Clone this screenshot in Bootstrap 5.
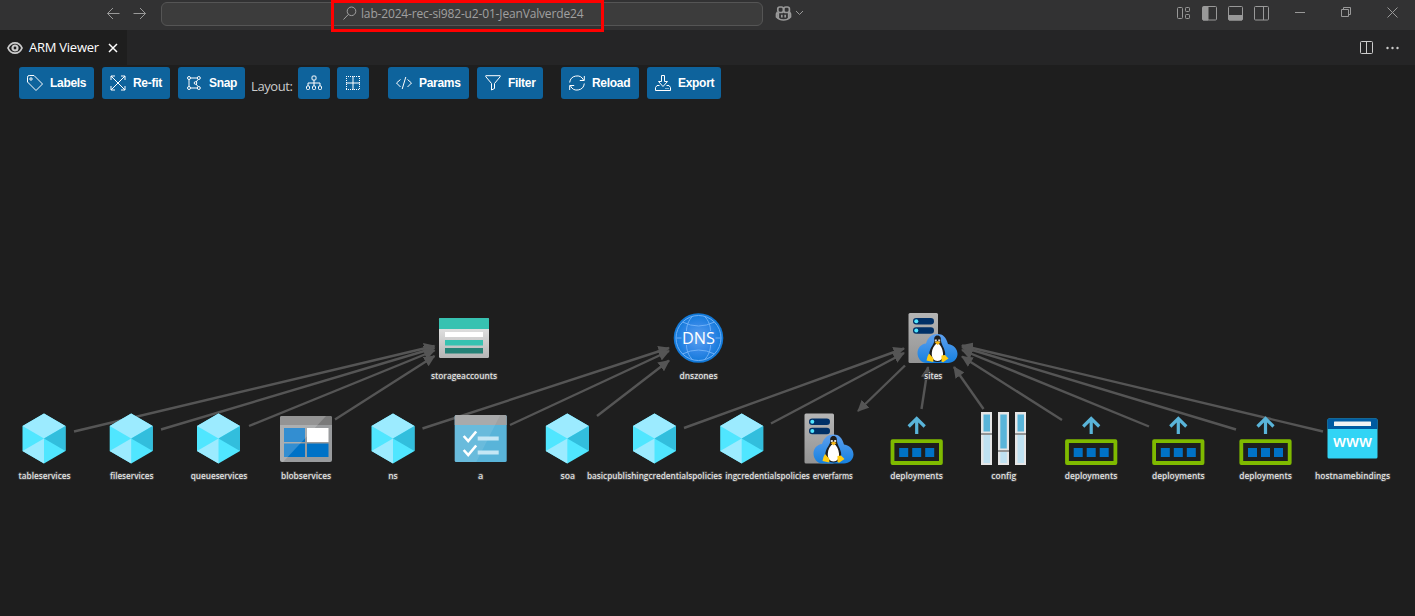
<!DOCTYPE html>
<html lang="en">
<head>
<meta charset="utf-8">
<meta name="viewport" content="width=device-width, initial-scale=1">
<title>ARM Viewer</title>
<link href="https://cdn.jsdelivr.net/npm/bootstrap@5.3.0/dist/css/bootstrap.min.css" rel="stylesheet">
<style>
body{background:#1e1e1e;color:#ccc;font-family:"Open Sans","Noto Sans",sans-serif;height:616px;overflow:hidden}
svg{display:block;flex:none}
.titlebar{height:30px;background:#323233;color:#999;padding:0 17px 4px 106px}
.ico{fill:none;stroke:currentColor;stroke-width:1}
.arrow-next{margin-left:13px}
.command{width:602px;height:24px;background:#3c3c3c;border:1px solid #555;border-radius:6px;margin:1px 0 0 14px;padding-left:181px;font-size:12px;letter-spacing:-.16px;color:#a0a0a0}
.callout{left:331px;top:0;width:273px;height:32px;border:3px solid #f00;z-index:2}
.tabstrip{height:35px;background:#252526}
.viewtab{width:127px;background:#1e1e1e;color:#fff;font-size:13px;padding-left:7px}
.toolbar{padding:2px 19px 0;height:34px}
.tool{height:32px;background:#0e639c;color:#fff;border-radius:3px;border:0;padding:0 8px;font:bold 12px "Liberation Sans",sans-serif;letter-spacing:-.3px;gap:7px;white-space:nowrap}
.tool.square{width:32px;padding:0 7px}
.layout-name{font-size:13px;width:53px;padding:10px 0 0 6px;letter-spacing:-.4px;white-space:nowrap}
.graph text{font-family:"Open Sans","Noto Sans",sans-serif}
.node-label{font-size:9px;font-weight:600;fill:#e2e2e2;text-anchor:middle;paint-order:stroke;stroke:#3a3a3a;stroke-width:2px}
</style>
</head>
<body class="d-flex flex-column">
<header class="titlebar d-flex align-items-center position-relative">
 <svg class="ico" width="14" height="14" viewBox="0 0 14 14"><path d="M13.500 7.500H1.500M7 2 1.500 7.500 7 13"/></svg>
 <svg class="ico arrow-next" width="14" height="14" viewBox="0 0 14 14"><path d="M.5 7.500h12M7 2 12.500 7.500 7 13"/></svg>
 <div class="command d-flex align-items-center">
  <svg class="ico" width="14" height="15" viewBox="0 0 14 15"><circle cx="8.500" cy="5.300" r="4.300"/><path d="M5.500 8.300.5 13.500"/></svg>
  <span style="margin-left:4px" id="repo">lab-2024-rec-si982-u2-01-JeanValverde24</span>
 </div>
 <svg style="margin-left:12px" width="17" height="15" viewBox="0 0 17 15" fill="none" stroke="#999" stroke-width="1.700"><rect x="2.800" y="1" width="5.600" height="5.500" rx="2"/><rect x="8.800" y="1" width="5.600" height="5.500" rx="2"/><path d="M2.500 6 1.500 8v3c2 2 4 3 7 3s5-1 7-3V8l-1-2M3.300 7v5M13.700 7v5M6.800 8.800v2.800M10.200 8.800v2.800"/></svg>
 <svg class="ico" style="margin-left:3px" width="9" height="6" viewBox="0 0 9 6"><path d="m1 1 3.500 3.500L8 1"/></svg>
 <div class="d-flex align-items-center ms-auto">
  <svg class="ico" width="15" height="14" viewBox="0 0 15 14"><rect x=".5" y="1.500" width="5" height="11" rx="1"/><rect x="8.500" y="1.500" width="4" height="4" rx=".8"/><rect x="8.500" y="8.500" width="4" height="4" rx=".8"/></svg>
  <svg class="ico" style="margin-left:10px" width="15" height="15" viewBox="0 0 15 15"><rect x=".5" y=".5" width="14" height="13.500" rx="1"/><path d="M1 1h5v13H1z" fill="currentColor"/></svg>
  <svg class="ico" style="margin-left:11px" width="15" height="15" viewBox="0 0 15 15"><rect x=".5" y=".5" width="14" height="13.500" rx="1"/><path d="M1 9.500h13V14H1z" fill="currentColor"/></svg>
  <svg class="ico" style="margin-left:11px" width="15" height="15" viewBox="0 0 15 15"><rect x=".5" y=".5" width="14" height="13.500" rx="1"/><path d="M9.500 1v13"/></svg>
  <svg class="ico" style="margin-left:26px" width="11" height="11" viewBox="0 0 11 11"><path d="M0 4.500h10"/></svg>
  <svg class="ico" style="margin-left:35px" width="11" height="12" viewBox="0 0 11 12"><path d="M.5 2.500h7v7h-7zM2.500 2V.5h7v7H8"/></svg>
  <svg class="ico" style="margin-left:35px" width="11" height="12" viewBox="0 0 11 12"><path d="m.5.500 10 10m0-10-10 10"/></svg>
 </div>
 <div class="callout position-absolute"></div>
</header>
<nav class="tabstrip d-flex">
 <div class="viewtab d-flex align-items-center">
  <svg width="16" height="14" viewBox="0 0 16 14" fill="none" stroke="#ccc"><path d="M1 7C2.500 3.500 5 1.800 8 1.800S13.500 3.500 15 7c-1.500 3.500-4 5.200-7 5.200S2.500 10.500 1 7Z" stroke-width="1.800"/><circle cx="8" cy="7" r="2.500" stroke-width="2.200"/></svg>
  <span id="tabname" style="margin-left:6px;letter-spacing:-.25px">ARM Viewer</span>
  <svg class="ico" style="margin-left:9px" width="10" height="10" viewBox="0 0 10 10"><path d="m1 1 8 8m0-8-8 8" stroke-width="1.500"/></svg>
 </div>
 <div class="d-flex align-items-center ms-auto" style="padding-right:15px">
  <svg class="ico" width="15" height="14" viewBox="0 0 15 14"><rect x=".5" y=".5" width="12" height="12" rx="1"/><path d="M6.500 1v12"/></svg>
  <svg style="margin-left:10px" width="15" height="4" viewBox="0 0 15 4" fill="#ccc"><circle cx="2.500" cy="2" r="1.200"/><circle cx="7.500" cy="2" r="1.200"/><circle cx="12.500" cy="2" r="1.200"/></svg>
 </div>
</nav>
<div class="toolbar d-flex">
 <button class="tool d-flex align-items-center" style="width:75px"><svg class="ico" width="16" height="16" viewBox="0 0 16 16"><path d="M.5 2.200V7L9 15.500 15.500 9 7 .5H2.200Q.5.500.5 2.200Z"/><circle cx="4" cy="4" r="1.200"/></svg>Labels</button>
 <button class="tool d-flex align-items-center ms-2" style="width:68px"><svg class="ico" width="16" height="16" viewBox="0 0 16 16"><path d="m1 1 14 14M15 1 1 15M1 5V1h4M11 1h4v4M15 11v4h-4M5 15H1v-4"/></svg>Re-fit</button>
 <button class="tool d-flex align-items-center ms-2" style="width:67px"><svg class="ico" width="16" height="16" viewBox="0 0 16 16"><circle cx="3" cy="3" r="1.500"/><circle cx="12.800" cy="3" r="1.500"/><circle cx="9.500" cy="8" r="1.300"/><circle cx="3" cy="13" r="1.500"/><circle cx="12.800" cy="13" r="1.500"/><path d="M4.500 3h6.800M3 4.500v7M4.500 13h6.800M12 4.500 10.200 7M10.200 9.100l1.800 2.500"/></svg>Snap</button>
 <span class="layout-name">Layout:</span>
 <button class="tool square" aria-label="Tree layout"><svg class="ico" width="18" height="18" viewBox="0 0 18 18"><rect x="7" y="2" width="4" height="4" rx="1"/><rect x="1.500" y="12" width="3" height="3.500" rx="1"/><rect x="7.500" y="12" width="3" height="3.500" rx="1"/><rect x="13.500" y="12" width="3" height="3.500" rx="1"/><path d="M9 6v6M3 12V9h12v3"/></svg></button>
 <button class="tool square" aria-label="Grid layout" style="margin-left:7px"><svg class="ico" width="18" height="18" viewBox="0 0 18 18"><path d="M9 2v14M2 9h14"/><path d="M2.500 2v14M15.500 2v14M2 2.500h14M2 15.500h14" stroke-dasharray="1 1"/></svg></button>
 <button class="tool d-flex align-items-center" style="width:81px;margin-left:19px"><svg class="ico" width="16" height="16" viewBox="0 0 16 16"><path d="M4.500 4.500.5 8l4 4M11.500 4.500l4 3.500-4 4M9.800 2 6.200 14"/></svg>Params</button>
 <button class="tool d-flex align-items-center ms-2" style="width:66px"><svg class="ico" width="16" height="16" viewBox="0 0 16 16"><path d="M.8.700h14.400v1L9.500 8.500v5L6.500 15V8.500L.8 1.700Z"/></svg>Filter</button>
 <button class="tool d-flex align-items-center" style="width:78px;margin-left:18px"><svg class="ico" width="16" height="16" viewBox="0 0 16 16"><path d="M.7 7.500A7.300 7.300 0 0 1 14.500 5M15.300 1v4.500h-4.500M15.300 8.500A7.300 7.300 0 0 1 1.500 11M.7 15v-4.500h4.500"/></svg>Reload</button>
 <button class="tool d-flex align-items-center ms-2" style="width:74px"><svg class="ico" width="16" height="16" viewBox="0 0 16 16"><path d="M6.500.5h3v6h3L8 11.500 3.500 6.500h3ZM4.500 10.500H2l-1.500 2v3h15v-3l-1.500-2h-2.500"/><path d="M10.500 13.500h1M12.500 13.500h1"/></svg>Export</button>
</div>
<main class="graph">
<svg width="1415" height="517" viewBox="0 99 1415 517">
<defs>
 <marker id="tip" markerUnits="userSpaceOnUse" markerWidth="12" markerHeight="11" refX="10.500" refY="5.500" orient="auto"><path d="M0 0 11.500 5.500 0 11Z" fill="#555"/></marker>
 <linearGradient id="server" x2="0" y2="1"><stop stop-color="#b5b5b5"/><stop offset="1" stop-color="#949494"/></linearGradient>
 <linearGradient id="plate" x2="0" y2="1"><stop stop-color="#eee"/><stop offset="1" stop-color="#b5b5b5"/></linearGradient>
 <linearGradient id="cloud" x2="0" y2="1"><stop stop-color="#5ea0ef"/><stop offset="1" stop-color="#1580df"/></linearGradient>
 <radialGradient id="globe"><stop stop-color="#5ea0ef"/><stop offset=".6" stop-color="#2f86e6"/><stop offset="1" stop-color="#0f78d7"/></radialGradient>
 <g id="cube"><path d="M0-25 21.500-12.500V12.500L0 25-21.500 12.500V-12.500Z" fill="#50e6ff"/><path d="M0-25 21.500-12.500 0 0-21.500-12.500Z" fill="#9cebff"/><path d="M0 0 21.500-12.500V12.500Z" fill="#32bedd"/><path d="M0 0V25L-21.500 12.500Z" fill="#9cebff"/></g>
 <g id="linux"><rect x="-24.500" y="-25" width="29.500" height="50" rx="1.500" fill="url(#server)"/><rect x="-20" y="-20" width="21" height="6.400" rx="3.200" fill="#003067"/><rect x="-20" y="-10.700" width="21" height="6.400" rx="3.200" fill="#003067"/><circle cx="-16.700" cy="-16.800" r="2" fill="#50e6ff"/><circle cx="-16.700" cy="-7.500" r="2" fill="#50e6ff"/>
  <path d="M-6 25C-12 25-15.500 20-15.500 15S-12 6-7 5.500C-5-1-1-4 4.500-4S13-1 15 6C21 7 24.500 11 24.500 16S20 25 15 25Z" fill="url(#cloud)"/>
  <path d="M4.500-2.500C1.500-2.500 1 0 1.200 2.500 1.500 6-2.500 9-3.500 14-4.500 19-1 24 4.500 24S13 19 12 14C11 9 8 6 8 2.500 8 0 7.500-2.500 4.500-2.500Z" fill="#1d1d1d"/>
  <path d="M4.500 5C1 7-1 11-1.200 15-1.500 20 1 23 4.500 23S10.500 20 10 15C9.500 11 8 7 4.500 5Z" fill="#fff"/><path d="M1.800 1.500h2v2h-2zM5.200 1.500h2v2h-2z" fill="#ddd"/><path d="m1.700 4.500 3-1.600 2.800 1.600L4.700 7Z" fill="#f7b916"/>
  <path d="M-4 15.500.5 20.500.2 24-6.500 22.500-5.500 18.500ZM8.500 17.500 12 17l3.500 3.500-5.500 3.700-1.500-.7Z" fill="#fc1"/></g>
 <g id="deploy"><path d="M0-5V-20.500M-8-12.500 0-20.500 8-12.500" fill="none" stroke="#59b4d9" stroke-width="3.200"/><rect x="-24.200" y="2.200" width="48.400" height="21.800" fill="none" stroke="#7fba00" stroke-width="3.800" stroke-linejoin="round"/><path d="M-17.500 9h9v9h-9zM-4.500 9h9v9h-9zM8.500 9h9v9h-9z" fill="#0072c6"/></g>
</defs>
<g stroke="#555" stroke-width="2.400" fill="none">
 <path marker-end="url(#tip)" d="M74 431.500 434.500 346"/><path marker-end="url(#tip)" d="M161 429.500 434.500 348"/><path marker-end="url(#tip)" d="M249 426 434.500 350.500"/><path marker-end="url(#tip)" d="M335 419.500 434.500 356"/>
 <path marker-end="url(#tip)" d="M422.500 428.500 669 348"/><path marker-end="url(#tip)" d="M510 425 669 351"/><path marker-end="url(#tip)" d="M597 416 669 360.500"/>
 <path marker-end="url(#tip)" d="M684 428 904 348.500"/><path marker-end="url(#tip)" d="M771 423.500 904 353"/><path marker-end="url(#tip)" d="M905 365.500 858 411"/><path marker-end="url(#tip)" d="M921.500 409 928 367"/><path marker-end="url(#tip)" d="M983.500 409 954 367"/><path marker-end="url(#tip)" d="M1062 420 962 356.500"/><path marker-end="url(#tip)" d="M1149 426.500 962 350"/><path marker-end="url(#tip)" d="M1236 429.500 962 347"/><path marker-end="url(#tip)" d="M1323 431.500 962 345.500"/>
</g>
<g><rect x="439" y="318" width="50" height="40" rx="1.500" fill="url(#plate)"/><path d="M439 329v-10q0-1 1.500-1h47q1.500 0 1.500 1v10Z" fill="#37c2b1"/><path d="M445 332h38v5h-38z" fill="#fff"/><path d="M445 340h38v5.500h-38z" fill="#37c2b1"/><path d="M445 348h38v5.500h-38z" fill="#258277"/></g>
<g transform="translate(698.500 338)"><circle r="24.800" fill="url(#globe)"/><g fill="none" stroke="#6eb0f7" stroke-width="1"><circle r="22.500"/><path d="M-6-21.500C-10-18-12-12-12-7M6-21.500C10-18 12-12 12-7M-6 21.500C-10 18-12 12-12 7M6 21.500C10 18 12 12 12 7M-16-16Q0-8 16-16M-16 16Q0 8 16 16M-22 0h5M17 0h5"/></g><text x="0" y="6" text-anchor="middle" font-size="17" fill="#fff" textLength="33" lengthAdjust="spacingAndGlyphs">DNS</text></g>
<use href="#linux" x="933" y="338"/>
<use href="#cube" x="44" y="438.500"/><use href="#cube" x="131.200" y="438.500"/><use href="#cube" x="218.500" y="438.500"/>
<g transform="translate(306 439)"><rect x="-26" y="-23" width="52" height="46" rx="2" fill="#999b9d"/><path d="M-26-14v-7q0-2 2-2h48q2 0 2 2v7Z" fill="#7a7a7a"/><path d="M-22-11H-1V3h-21zM-22 4.500H-1V18h-21zM1 4.500h21.500V18H1z" fill="#0072c6"/><path d="M1-11h21.500V3H1z" fill="#fff"/><path d="M-26 21v-42q0-2 2-2h44L-23 23q-3 0-3-2Z" fill="#fff" opacity=".2"/></g>
<use href="#cube" x="393" y="438.500"/>
<g transform="translate(480.700 438.500)"><rect x="-26" y="-23.500" width="52" height="47" rx="1.500" fill="#59b4d9"/><path d="M-26-13.500V-22q0-1.500 1.500-1.500h49q1.500 0 1.500 1.500v8.500Z" fill="#a0a1a2"/><path d="M-26-23.500h45.500L-4.500 23.500H-26Z" fill="#fff" opacity=".1"/><path d="m-17-2.500 4.500 5L-4.500-7M-17 11.500l4.500 5L-4.500 7" fill="none" stroke="#fff" stroke-width="2.600"/><path d="M-3-2h21v4H-3zM-3 12h21v4H-3z" fill="#c5e7f5"/></g>
<use href="#cube" x="567.300" y="438.500"/><use href="#cube" x="654.500" y="438.500"/><use href="#cube" x="741.700" y="438.500"/><use href="#linux" x="829" y="438.500"/>
<use href="#deploy" x="916.700" y="439"/>
<g transform="translate(1004 439)"><g fill="#e6e6e6"><path d="M-23-27h11v53h-11zM-6-27h11v53h-11zM11-27h11v53h-11z"/></g><g fill="#bfe1f1"><path d="M-20.500-4.500h6.500V24h-6.500zM-3.700 13h6.500v11h-6.500zM13.500-4.500h6.500V24h-6.500z"/></g><g fill="#59b4d9"><path d="M-20.500-24.500h6.500v17h-6.500zM-3.700-24.500h6.500V9.500h-6.500zM13.500-24.500h6.500v17h-6.500z"/></g><path d="M-23-5h11M-6 12h11M11-5h11" stroke="#7a7a7a" stroke-width="1.600"/></g>
<use href="#deploy" x="1091.200" y="439"/><use href="#deploy" x="1178.300" y="439"/><use href="#deploy" x="1265.500" y="439"/>
<g transform="translate(1352.500 438.500)"><rect x="-25" y="-20" width="50" height="40" rx="1.500" fill="#32d4f5"/><path d="M-25-9.500V-18.500q0-1.500 1.500-1.500h47q1.500 0 1.500 1.500v9Z" fill="#005ba1"/><rect x="-18.500" y="-17" width="37" height="4.500" rx=".6" fill="#f2f2f2"/><text y="8.500" text-anchor="middle" font-size="17" font-weight="600" fill="#fff" textLength="39" lengthAdjust="spacingAndGlyphs">www</text></g>
<g class="node-label">
 <text x="464" y="378.500" textLength="66" lengthAdjust="spacingAndGlyphs">storageaccounts</text><text x="698.500" y="378.500" textLength="38" lengthAdjust="spacingAndGlyphs">dnszones</text><text x="933.300" y="378.500" textLength="18" lengthAdjust="spacingAndGlyphs">sites</text>
 <text x="44.500" y="479" textLength="52" lengthAdjust="spacingAndGlyphs">tableservices</text><text x="131.700" y="479" textLength="43.500" lengthAdjust="spacingAndGlyphs">fileservices</text><text x="219" y="479" textLength="56.500" lengthAdjust="spacingAndGlyphs">queueservices</text><text x="306" y="479" textLength="50" lengthAdjust="spacingAndGlyphs">blobservices</text><text x="393" y="479" textLength="9.500" lengthAdjust="spacingAndGlyphs">ns</text><text x="480.500" y="479">a</text><text x="567.700" y="479" textLength="14.500" lengthAdjust="spacingAndGlyphs">soa</text>
 <text x="832.700" y="479" textLength="40" lengthAdjust="spacingAndGlyphs">erverfarms</text><text x="767.500" y="479" textLength="84.500" lengthAdjust="spacingAndGlyphs">ingcredentialspolicies</text><text x="654.500" y="479" textLength="135" lengthAdjust="spacingAndGlyphs">basicpublishingcredentialspolicies</text>
 <text x="916.500" y="479" textLength="52.500" lengthAdjust="spacingAndGlyphs">deployments</text><text x="1003.800" y="479" textLength="25" lengthAdjust="spacingAndGlyphs">config</text><text x="1091" y="479" textLength="52.500" lengthAdjust="spacingAndGlyphs">deployments</text><text x="1178.300" y="479" textLength="52.500" lengthAdjust="spacingAndGlyphs">deployments</text><text x="1265.500" y="479" textLength="52.500" lengthAdjust="spacingAndGlyphs">deployments</text><text x="1352.500" y="479" textLength="75" lengthAdjust="spacingAndGlyphs">hostnamebindings</text>
</g>
</svg>
</main>
<script src="https://cdn.jsdelivr.net/npm/bootstrap@5.3.0/dist/js/bootstrap.bundle.min.js"></script>
</body>
</html>
